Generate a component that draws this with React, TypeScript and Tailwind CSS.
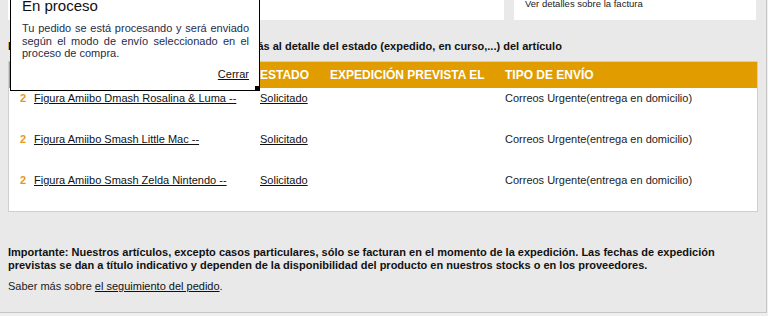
import React from 'react';

const items = [
  'Figura Amiibo Dmash Rosalina & Luma --',
  'Figura Amiibo Smash Little Mac --',
  'Figura Amiibo Smash Zelda Nintendo --',
];

const App = () => {
  return (
    <div className="w-[768px] h-[316px] bg-[#efefef] overflow-hidden font-['Liberation_Sans',Arial,sans-serif] text-[#1a1a1a]">
      <div className="relative w-[767px] h-[313px] bg-[#e9e9e9] border-r border-b border-[#c6c6c6]">
        {/* Top panels */}
        <div className="flex gap-[10px] px-2 h-[20px]">
          <div className="w-[496px] bg-white"></div>
          <div className="w-[242px] bg-white pl-[11px]">
            <p className="text-[9.5px] leading-[10px] -mt-[1px] text-[#222]">Ver detalles sobre la factura</p>
          </div>
        </div>

        {/* Heading */}
        <h2 className="mt-[20px] px-2 text-[11px] leading-[13px] font-bold text-[#111]">
          Haga clic sobre el estado para poder acceder más al detalle del estado (expedido, en curso,...) del artículo
        </h2>

        {/* Table */}
        <div className="mx-2 mt-[8px] bg-white border border-[#cfcfcf]">
          <div className="flex items-center h-[26px] bg-[#e19c00] text-white font-bold text-[12px]">
            <div className="w-[251px] pl-[11px]">ARTÍCULO</div>
            <div className="w-[70px]">ESTADO</div>
            <div className="w-[175px]">EXPEDICIÓN PREVISTA EL</div>
            <div>TIPO DE ENVÍO</div>
          </div>
          {items.map((name) => (
            <div key={name} className="flex items-start h-[41px] pt-[4px] text-[11px] leading-[13px] text-[#222]">
              <div className="w-[251px] pl-[11px] flex">
                <span className="w-[14px] font-bold text-[#e39a1c]">2</span>
                <a href="#" className="underline text-[#111]">{name}</a>
              </div>
              <div className="w-[70px]">
                <a href="#" className="underline text-[#111]">Solicitado</a>
              </div>
              <div className="w-[175px]"></div>
              <div>Correos Urgente(entrega en domicilio)</div>
            </div>
          ))}
        </div>

        {/* Notes */}
        <p className="mt-[34px] px-2 pr-[40px] text-[11px] leading-[13px] font-bold text-[#111]">
          Importante: Nuestros artículos, excepto casos particulares, sólo se facturan en el momento de la expedición. Las fechas de expedición previstas se dan a título indicativo y dependen de la disponibilidad del producto en nuestros stocks o en los proveedores.
        </p>
        <p className="mt-[8px] px-2 text-[11px] leading-[13px] text-[#222]">
          Saber más sobre <a href="#" className="underline text-[#111]">el seguimiento del pedido</a>.
        </p>

        {/* Popup */}
        <div className="absolute left-[10px] top-[-12px] w-[250px] h-[103px] bg-white border border-black pt-[8px] pl-[11px] pr-[10px]">
          <h3 className="text-[15px] leading-[18px] text-[#111]">En proceso</h3>
          <p className="mt-[7px] text-[11px] leading-[12.5px] text-justify text-[#1f2d4a]">
            Tu pedido se está procesando y será enviado según el modo de envío seleccionado en el proceso de compra.
          </p>
          <div className="mt-[8px] text-right text-[11px] leading-[13px]">
            <a href="#" className="underline text-[#111]">Cerrar</a>
          </div>
          <div className="absolute right-[-1px] bottom-[-1px] w-[5px] h-[5px] bg-black"></div>
        </div>
      </div>
    </div>
  );
};

export default App;
